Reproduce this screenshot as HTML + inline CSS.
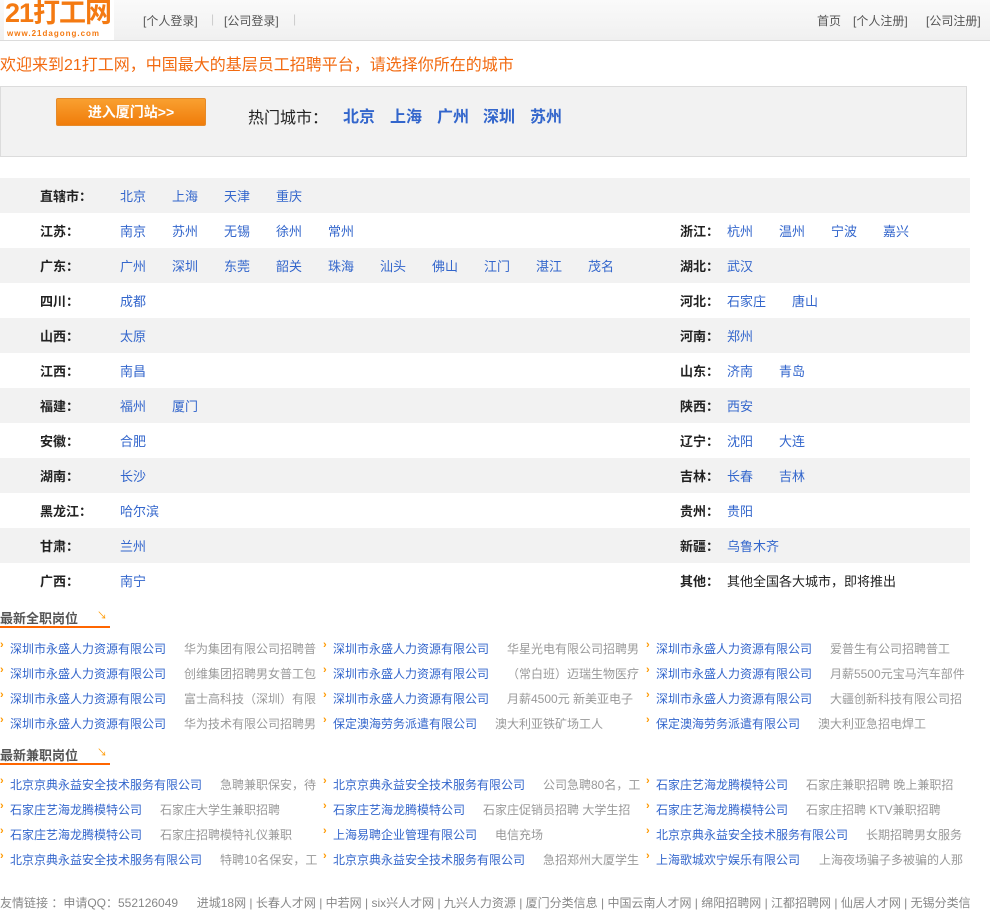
<!DOCTYPE html>
<html><head><meta charset="utf-8"><style>
*{margin:0;padding:0;box-sizing:border-box}
body{width:990px;height:900px;overflow:hidden;background:#fff;font-family:"Liberation Sans","Noto Sans CJK SC",sans-serif;font-size:13px;color:#333;position:relative}
.a{position:absolute;white-space:nowrap}
.hdr{position:absolute;left:0;top:0;width:990px;height:41px;background:linear-gradient(#fafafa,#f0f0f0);border-bottom:1px solid #dcdcdc}
.logo{position:absolute;left:4px;top:0;width:110px;height:40px;background:#fff;overflow:hidden}
.nav{color:#555;font-size:12px;top:12px}
.sep{color:#ccc;font-size:12px;top:12px}
.row{position:absolute;left:0;width:970px;height:35px}
.g{background:#f2f2f2}
.p{font-weight:bold;color:#222;font-size:13px}
.c{color:#3366cc;font-size:13px}
.jl{color:#3366cc;font-size:12px}
.jd{color:#999;font-size:12px}
.b{color:#f90;font-size:11px;font-weight:bold}
.hc{font-size:16px;font-weight:bold;color:#3366cc;top:103px}
</style></head><body>
<div class="hdr"></div>
<div class="logo">
<div class="a" style="left:1px;top:-3px;font-size:27px;line-height:32px;font-weight:bold;color:#f47a12;letter-spacing:-1px">21打工网</div>
<div class="a" style="left:3px;top:29px;font-size:8px;line-height:9px;font-weight:bold;color:#f47a12;letter-spacing:1px">www.21dagong.com</div>
</div>
<div class="a nav" style="left:143px">[个人登录]</div>
<div class="a sep" style="left:211px">|</div>
<div class="a nav" style="left:224px">[公司登录]</div>
<div class="a sep" style="left:293px">|</div>
<div class="a nav" style="left:817px">首页</div>
<div class="a nav" style="left:853px">[个人注册]</div>
<div class="a nav" style="left:926px">[公司注册]</div>
<div class="a" style="left:0;top:51px;font-size:16px;color:#f26a10">欢迎来到21打工网，中国最大的基层员工招聘平台，请选择你所在的城市</div>
<div class="a" style="left:0;top:86px;width:967px;height:71px;background:#f2f2f2;border:1px solid #dcdcdc"></div>
<div class="a" style="left:56px;top:98px;width:150px;height:28px;background:linear-gradient(#f9a030,#f07c0a);border:1px solid #e58a2a;border-radius:2px;color:#fff;font-weight:bold;font-size:14px;text-align:center;line-height:26px">进入厦门站&gt;&gt;</div>
<div class="a" style="left:248px;top:104px;font-size:16px;color:#222">热门城市：</div>
<div class="a hc" style="left:343px">北京</div>
<div class="a hc" style="left:390px">上海</div>
<div class="a hc" style="left:437px">广州</div>
<div class="a hc" style="left:483px">深圳</div>
<div class="a hc" style="left:530px">苏州</div>

<div class="row g" style="top:178px"></div>
<div class="row g" style="top:248px"></div>
<div class="row g" style="top:318px"></div>
<div class="row g" style="top:388px"></div>
<div class="row g" style="top:458px"></div>
<div class="row g" style="top:528px"></div>
<div id="cities"></div>
<script>
var L=[["直辖市：",["北京","上海","天津","重庆"],"",[]],
["江苏：",["南京","苏州","无锡","徐州","常州"],"浙江：",["杭州","温州","宁波","嘉兴"]],
["广东：",["广州","深圳","东莞","韶关","珠海","汕头","佛山","江门","湛江","茂名"],"湖北：",["武汉"]],
["四川：",["成都"],"河北：",["石家庄","唐山"]],
["山西：",["太原"],"河南：",["郑州"]],
["江西：",["南昌"],"山东：",["济南","青岛"]],
["福建：",["福州","厦门"],"陕西：",["西安"]],
["安徽：",["合肥"],"辽宁：",["沈阳","大连"]],
["湖南：",["长沙"],"吉林：",["长春","吉林"]],
["黑龙江：",["哈尔滨"],"贵州：",["贵阳"]],
["甘肃：",["兰州"],"新疆：",["乌鲁木齐"]],
["广西：",["南宁"],"其他：",[]]];
var h="";
L.forEach(function(r,i){var y=186+i*35;
h+='<div class="a p" style="left:40px;top:'+y+'px">'+r[0]+'</div>';
r[1].forEach(function(c,j){h+='<div class="a c" style="left:'+(120+j*52)+'px;top:'+y+'px">'+c+'</div>'});
if(r[2])h+='<div class="a p" style="left:680px;top:'+y+'px">'+r[2]+'</div>';
var x=727;r[3].forEach(function(c){h+='<div class="a c" style="left:'+x+'px;top:'+y+'px">'+c+'</div>';x+=c.length*13+26});
if(i==11)h+='<div class="a" style="left:727px;top:'+y+'px;color:#222">其他全国各大城市，即将推出</div>';
});
function sec(t,y){h+='<div class="a" style="left:0;top:'+y+'px;font-size:13px;font-weight:bold;color:#555">'+t+'</div><div class="a" style="left:97px;top:'+(y-1)+'px;color:#f90;font-size:10px">↘</div><div class="a" style="left:0;top:'+(y+18)+'px;width:110px;height:2px;background:#f60"></div>';}
function rows(d,y0,xs){d.forEach(function(r,i){var y=y0+i*25;for(var k=0;k<3;k++){var bx=[0,323,646][k];
h+='<div class="a b" style="left:'+bx+'px;top:'+(y-1)+'px">›</div><div class="a jl" style="left:'+(bx+10)+'px;top:'+y+'px">'+r[k*2]+'</div><div class="a jd" style="left:'+xs[i][k]+'px;top:'+y+'px">'+r[k*2+1]+'</div>';}});}
sec("最新全职岗位",608);
var S="深圳市永盛人力资源有限公司",B="保定澳海劳务派遣有限公司";
rows([[S,"华为集团有限公司招聘普",S,"华星光电有限公司招聘男",S,"爱普生有公司招聘普工"],
[S,"创维集团招聘男女普工包",S,"（常白班）迈瑞生物医疗",S,"月薪5500元宝马汽车部件"],
[S,"富士高科技（深圳）有限",S,"月薪4500元 新美亚电子",S,"大疆创新科技有限公司招"],
[S,"华为技术有限公司招聘男",B,"澳大利亚铁矿场工人",B,"澳大利亚急招电焊工"]],640,
[[184,507,830],[184,507,830],[184,507,830],[184,495,818]]);
sec("最新兼职岗位",745);
var J="北京京典永益安全技术服务有限公司",Z="石家庄艺海龙腾模特公司";
rows([[J,"急聘兼职保安，待",J,"公司急聘80名，工",Z,"石家庄兼职招聘 晚上兼职招"],
[Z,"石家庄大学生兼职招聘",Z,"石家庄促销员招聘 大学生招",Z,"石家庄招聘 KTV兼职招聘"],
[Z,"石家庄招聘模特礼仪兼职","上海易聘企业管理有限公司","电信充场",J,"长期招聘男女服务"],
[J,"特聘10名保安，工",J,"急招郑州大厦学生","上海歌城欢宁娱乐有限公司","上海夜场骗子多被骗的人那"]],776,
[[220,543,806],[160,483,806],[160,495,866],[220,543,819]]);
h+='<div class="a" style="left:0;top:894px;font-size:12px;color:#888">友情链接 ：申请QQ：552126049 　 进城18网 | 长春人才网 | 中若网 | six兴人才网 | 九兴人力资源 | 厦门分类信息 | 中国云南人才网 | 绵阳招聘网 | 江都招聘网 | 仙居人才网 | 无锡分类信</div>';
document.getElementById("cities").innerHTML=h;
</script>
</body></html>
